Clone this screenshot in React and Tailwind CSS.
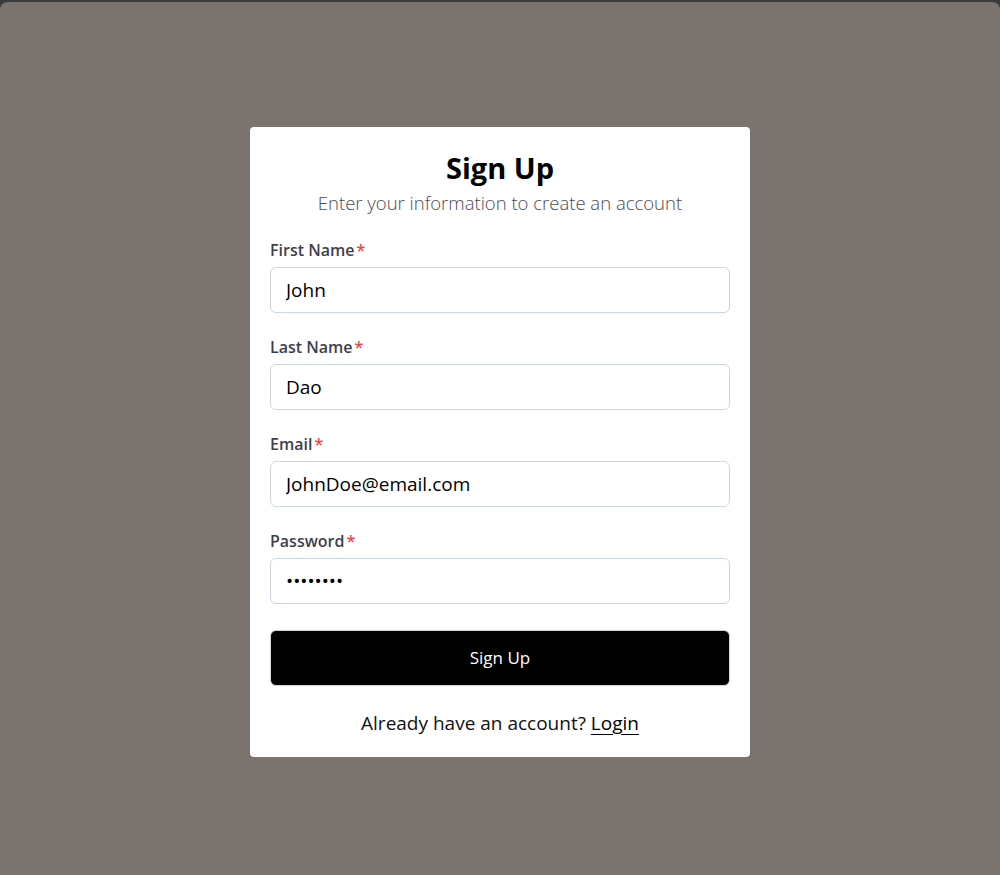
import { useState } from 'react';

const FIELDS = [
  { id: 'firstName', label: 'First Name', type: 'text', value: 'John' },
  { id: 'lastName', label: 'Last Name', type: 'text', value: 'Dao' },
  { id: 'email', label: 'Email', type: 'email', value: 'JohnDoe@email.com' },
  { id: 'password', label: 'Password', type: 'password', value: 'password' },
];

function Field({ field, value, onChange }) {
  return (
    <div className="flex flex-col">
      <label htmlFor={field.id} className="text-[16px] leading-[24px] font-semibold text-[#3f3f4b] mb-[5px]">
        {field.label}
        <span className="text-[#ef4444] ml-[2px]">*</span>
      </label>
      <input
        id={field.id}
        type={field.type}
        value={value}
        onChange={(e) => onChange(field.id, e.target.value)}
        className="h-[46px] w-full rounded-md border border-[#cbd5e1] bg-white px-[15px] text-[19px] text-black outline-none"
      />
    </div>
  );
}

export default function App() {
  const [form, setForm] = useState(
    Object.fromEntries(FIELDS.map((f) => [f.id, f.value]))
  );

  const update = (id, value) => setForm((prev) => ({ ...prev, [id]: value }));

  return (
    <div className="h-[875px] bg-[#3b3b3b] pt-[2px]" style={{ fontFamily: '"Open Sans", "Noto Sans", sans-serif' }}>
      <div className="h-full rounded-t-lg bg-[#7b736e] flex justify-center pt-[125px]">
        <div className="w-[500px] h-fit rounded bg-white px-5 pt-[22px] pb-[20px]">
          <div className="flex flex-col items-center">
            <h1 className="text-[29px] leading-[38px] font-bold text-black">Sign Up</h1>
            <p className="mt-[3px] text-[18.5px] leading-[26px] font-light text-[#4b4b55]">
              Enter your information to create an account
            </p>
          </div>

          <form className="mt-[22px] flex flex-col gap-[22px]" onSubmit={(e) => e.preventDefault()}>
            {FIELDS.map((field) => (
              <Field key={field.id} field={field} value={form[field.id]} onChange={update} />
            ))}
            <button
              type="submit"
              className="mt-[4px] h-[56px] w-full rounded-md border border-[#d1d5db] bg-black text-[17px] text-white"
            >
              Sign Up
            </button>
          </form>

          <p className="mt-[23px] text-center text-[19px] leading-[28px] text-[#111]">
            Already have an account?{' '}
            <a href="#" className="underline underline-offset-4 text-black">Login</a>
          </p>
        </div>
      </div>
    </div>
  );
}
